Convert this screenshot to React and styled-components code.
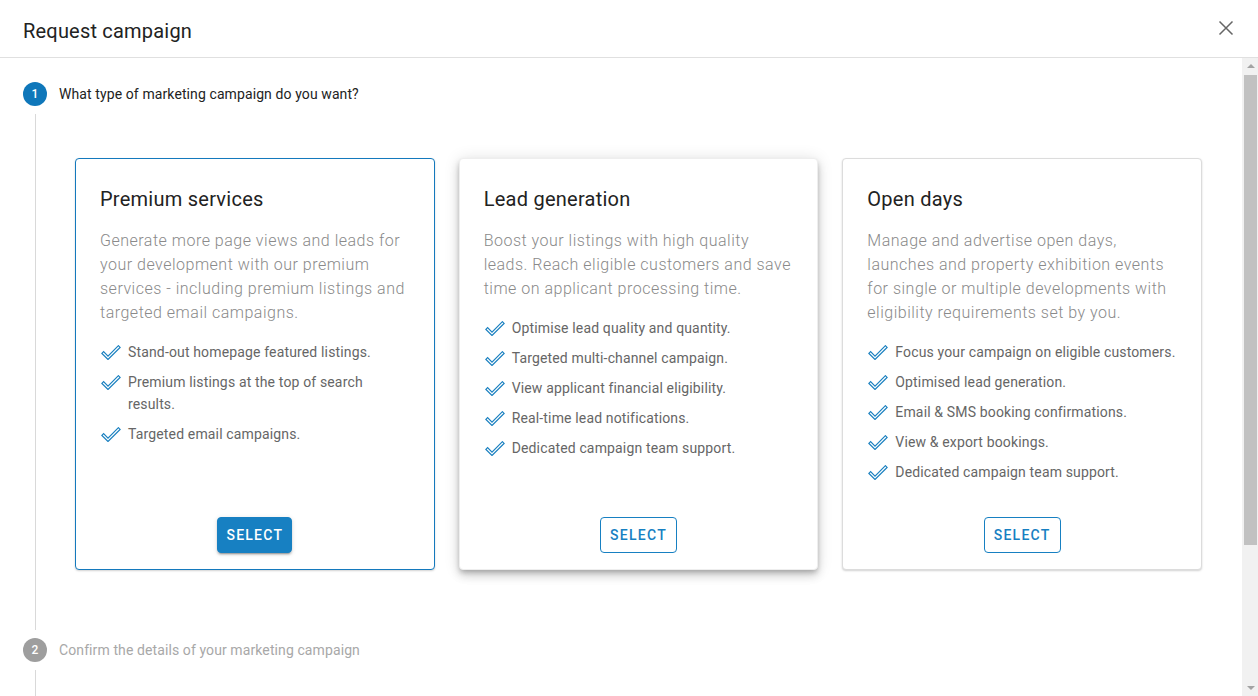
import React from "react";
import styled, { createGlobalStyle } from "styled-components";

const GlobalStyle = createGlobalStyle`
  html, body {
    margin: 0;
    padding: 0;
    height: 100%;
    background: #fff;
    font-family: Roboto, "Noto Sans", Arial, sans-serif;
  }
  #root {
    height: 100%;
  }
  * {
    box-sizing: border-box;
  }
`;

const cards = [
  {
    title: "Premium services",
    text: "Generate more page views and leads for your development with our premium services - including premium listings and targeted email campaigns.",
    features: [
      "Stand-out homepage featured listings.",
      "Premium listings at the top of search results.",
      "Targeted email campaigns.",
    ],
    selected: true,
  },
  {
    title: "Lead generation",
    text: "Boost your listings with high quality leads. Reach eligible customers and save time on applicant processing time.",
    features: [
      "Optimise lead quality and quantity.",
      "Targeted multi-channel campaign.",
      "View applicant financial eligibility.",
      "Real-time lead notifications.",
      "Dedicated campaign team support.",
    ],
    raised: true,
  },
  {
    title: "Open days",
    text: "Manage and advertise open days, launches and property exhibition events for single or multiple developments with eligibility requirements set by you.",
    features: [
      "Focus your campaign on eligible customers.",
      "Optimised lead generation.",
      "Email & SMS booking confirmations.",
      "View & export bookings.",
      "Dedicated campaign team support.",
    ],
  },
];

// outlined check mark, drawn as a hollow thick tick
const CheckIcon = () => (
  <svg width="20" height="15" viewBox="0 0 20 15" fill="none">
    <path
      d="M0.9 8.4L2.6 6.7 7 11.1 17.4 0.7 19.1 2.4 7 14.5z"
      stroke="#1a80c0"
      strokeWidth="1.2"
      strokeLinejoin="miter"
    />
  </svg>
);

const CloseIcon = () => (
  <svg width="16" height="16" viewBox="0 0 16 16">
    <path d="M1.5 1.5l13 13M14.5 1.5l-13 13" stroke="#666" strokeWidth="1.5" />
  </svg>
);

const Arrow = ({ down }) => (
  <svg width="8" height="4" viewBox="0 0 8 4">
    <path d={down ? "M0 0h8L4 4z" : "M0 4h8L4 0z"} fill="#a3a3a3" />
  </svg>
);

const App = () => {
  return (
    <>
      <GlobalStyle />
      <Dialog>
        <Header>
          <Title>Request campaign</Title>
          <CloseButton aria-label="close">
            <CloseIcon />
          </CloseButton>
        </Header>
        <BodyRow>
          <Body>
            <Stepper>
              <StepHead>
                <StepNumber $active>1</StepNumber>
                <StepLabel $active>What type of marketing campaign do you want?</StepLabel>
              </StepHead>
              <StepContent>
                <Panel>
                  <CardGrid>
                    {cards.map((c) => (
                      <Card key={c.title} $selected={c.selected} $raised={c.raised}>
                        <CardTitle>{c.title}</CardTitle>
                        <CardText>{c.text}</CardText>
                        <FeatureList>
                          {c.features.map((f) => (
                            <Feature key={f}>
                              <IconBox>
                                <CheckIcon />
                              </IconBox>
                              <span>{f}</span>
                            </Feature>
                          ))}
                        </FeatureList>
                        <ButtonRow>
                          <SelectButton $filled={c.selected}>Select</SelectButton>
                        </ButtonRow>
                      </Card>
                    ))}
                  </CardGrid>
                </Panel>
              </StepContent>
              <StepHead>
                <StepNumber>2</StepNumber>
                <StepLabel>Confirm the details of your marketing campaign</StepLabel>
              </StepHead>
              <StepContent $empty />
            </Stepper>
          </Body>
          <ScrollBar>
            <ScrollButton>
              <Arrow />
            </ScrollButton>
            <ScrollTrack>
              <ScrollThumb />
            </ScrollTrack>
            <ScrollButton>
              <Arrow down />
            </ScrollButton>
          </ScrollBar>
        </BodyRow>
      </Dialog>
    </>
  );
};

const Dialog = styled.div`
  height: 100vh;
  display: flex;
  flex-direction: column;
  background: #fff;
`;

const Header = styled.div`
  height: 58px;
  flex-shrink: 0;
  display: flex;
  align-items: center;
  justify-content: space-between;
  padding: 4px 24px 0 23px;
  border-bottom: 1px solid #e0e0e0;
`;

const Title = styled.h2`
  margin: 0;
  font-size: 20px;
  font-weight: 400;
  color: #222;
  letter-spacing: 0.2px;
`;

const CloseButton = styled.button`
  border: none;
  background: none;
  padding: 0;
  margin-top: -6px;
  display: flex;
  cursor: pointer;
`;

const BodyRow = styled.div`
  flex: 1;
  min-height: 0;
  display: flex;
`;

const Body = styled.div`
  flex: 1;
  overflow: hidden;
`;

const ScrollBar = styled.div`
  width: 16px;
  flex-shrink: 0;
  background: #f1f1f1;
  display: flex;
  flex-direction: column;
`;

const ScrollButton = styled.div`
  height: 16px;
  flex-shrink: 0;
  display: flex;
  align-items: center;
  justify-content: center;
  padding-left: 1px;
`;

const ScrollTrack = styled.div`
  flex: 1;
  padding: 1px 1px 0 2px;
`;

const ScrollThumb = styled.div`
  height: 470px;
  background: #c1c1c1;
`;

const Stepper = styled.div`
  padding: 24px 0 24px 23px;
`;

const StepHead = styled.div`
  display: flex;
  align-items: center;
  gap: 12px;
  height: 24px;
`;

const StepNumber = styled.div`
  width: 24px;
  height: 24px;
  border-radius: 50%;
  background: ${(p) => (p.$active ? "#0f77ba" : "#9e9e9e")};
  color: #fff;
  font-size: 12px;
  font-weight: 500;
  display: flex;
  align-items: center;
  justify-content: center;
`;

const StepLabel = styled.div`
  font-size: 14px;
  color: ${(p) => (p.$active ? "#222" : "#a8a8a8")};
  letter-spacing: 0.1px;
`;

const StepContent = styled.div`
  margin: 8px 0 8px 12px;
  border-left: 1px solid #d9d9d9;
  padding: ${(p) => (p.$empty ? "0" : "28px 24px 18px 23px")};
  min-height: ${(p) => (p.$empty ? "167px" : "0")};
`;

const Panel = styled.div`
  padding: 16px 16px 42px;
`;

const CardGrid = styled.div`
  display: grid;
  grid-template-columns: repeat(3, 1fr);
  gap: 24px;
`;

const Card = styled.div`
  display: flex;
  flex-direction: column;
  padding: 24px 24px 16px;
  border-radius: 4px;
  background: #fff;
  border: 1px solid ${(p) => (p.$selected ? "#1479bd" : p.$raised ? "#eee" : "#dcdcdc")};
  box-shadow: ${(p) =>
    p.$raised
      ? "0 3px 5px -1px rgba(0,0,0,0.22), 0 6px 10px 0 rgba(0,0,0,0.14), 0 1px 16px 0 rgba(0,0,0,0.12)"
      : "0 1px 2px 0 rgba(0,0,0,0.18)"};
`;

const CardTitle = styled.h3`
  margin: 0 0 14px;
  font-size: 20px;
  line-height: 32px;
  font-weight: 400;
  color: #222;
  letter-spacing: 0.25px;
`;

const CardText = styled.p`
  margin: 0 0 16px;
  font-size: 16px;
  line-height: 24px;
  font-weight: 300;
  color: #8a8a8a;
  letter-spacing: 0.5px;
`;

const FeatureList = styled.ul`
  list-style: none;
  margin: 0;
  padding: 0;
  display: flex;
  flex-direction: column;
  gap: 8px;
`;

const Feature = styled.li`
  display: flex;
  gap: 7px;
  font-size: 14px;
  line-height: 22px;
  color: #666;
  letter-spacing: 0.15px;
`;

const IconBox = styled.span`
  flex-shrink: 0;
  height: 22px;
  display: flex;
  align-items: center;
  padding-left: 1px;
`;

const ButtonRow = styled.div`
  margin-top: auto;
  padding-top: 34px;
  display: flex;
  justify-content: center;
`;

const SelectButton = styled.button`
  height: 36px;
  padding: 0 ${(p) => (p.$filled ? "8px" : "9px")};
  border-radius: 4px;
  font-family: Roboto, Arial, sans-serif;
  font-size: 14px;
  font-weight: 500;
  letter-spacing: 1.25px;
  text-transform: uppercase;
  cursor: pointer;
  background: ${(p) => (p.$filled ? "#1780c2" : "#fff")};
  color: ${(p) => (p.$filled ? "#fff" : "#1780c2")};
  border: 1px solid #1780c2;
  box-shadow: ${(p) =>
    p.$filled ? "0 3px 1px -2px rgba(0,0,0,0.2), 0 2px 2px 0 rgba(0,0,0,0.14), 0 1px 5px 0 rgba(0,0,0,0.12)" : "none"};
`;

export default App;
